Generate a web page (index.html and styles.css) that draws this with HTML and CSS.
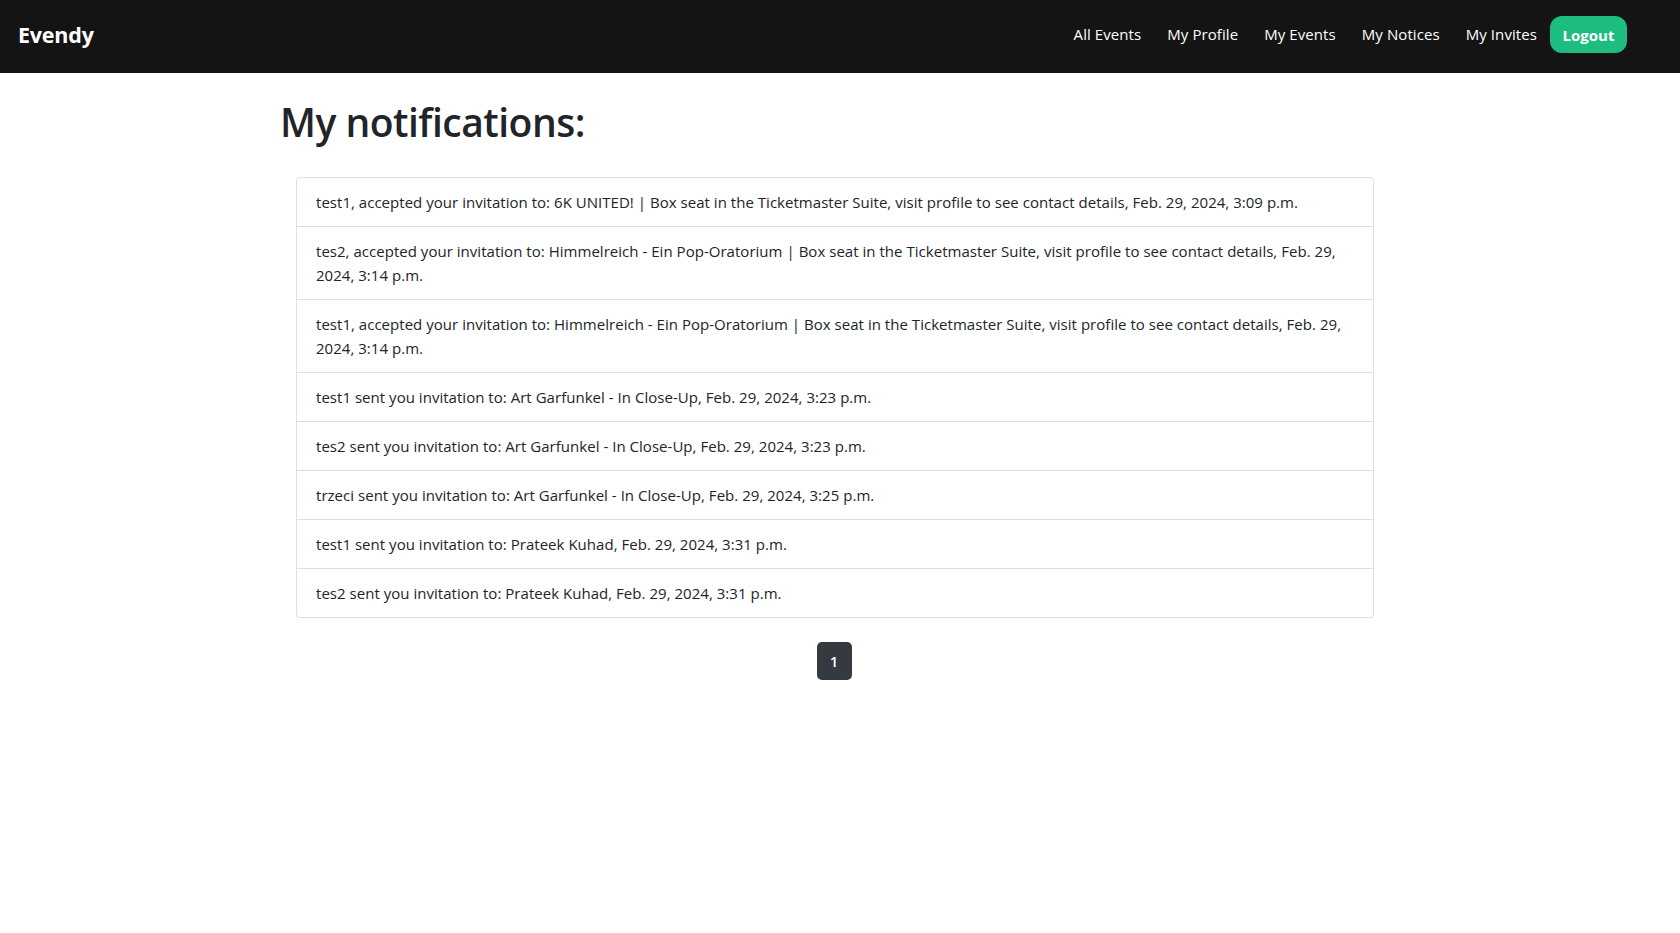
FILE: index.html
```html
<!DOCTYPE html>
<html lang="en">
<head>
<meta charset="utf-8">
<title>Evendy - My notifications</title>
<link rel="stylesheet" href="styles.css">
</head>
<body>
<nav class="navbar">
  <a class="brand" href="#">Evendy</a>
  <div class="nav-links">
    <a class="nav-link" href="#">All Events</a>
    <a class="nav-link" href="#">My Profile</a>
    <a class="nav-link" href="#">My Events</a>
    <a class="nav-link" href="#">My Notices</a>
    <a class="nav-link" href="#">My Invites</a>
    <a class="btn-logout" href="#">Logout</a>
  </div>
</nav>
<main class="container">
  <h1 class="title">My notifications:</h1>
  <ul class="list-group">
    <li class="list-item">test1, accepted your invitation to: 6K UNITED! | Box seat in the Ticketmaster Suite, visit profile to see contact details, Feb. 29, 2024, 3:09 p.m.</li>
    <li class="list-item">tes2, accepted your invitation to: Himmelreich - Ein Pop-Oratorium | Box seat in the Ticketmaster Suite, visit profile to see contact details, Feb. 29, 2024, 3:14 p.m.</li>
    <li class="list-item">test1, accepted your invitation to: Himmelreich - Ein Pop-Oratorium | Box seat in the Ticketmaster Suite, visit profile to see contact details, Feb. 29, 2024, 3:14 p.m.</li>
    <li class="list-item">test1 sent you invitation to: Art Garfunkel - In Close-Up, Feb. 29, 2024, 3:23 p.m.</li>
    <li class="list-item">tes2 sent you invitation to: Art Garfunkel - In Close-Up, Feb. 29, 2024, 3:23 p.m.</li>
    <li class="list-item">trzeci sent you invitation to: Art Garfunkel - In Close-Up, Feb. 29, 2024, 3:25 p.m.</li>
    <li class="list-item">test1 sent you invitation to: Prateek Kuhad, Feb. 29, 2024, 3:31 p.m.</li>
    <li class="list-item">tes2 sent you invitation to: Prateek Kuhad, Feb. 29, 2024, 3:31 p.m.</li>
  </ul>
  <div class="pagination">
    <span class="page-item active">1</span>
  </div>
</main>
</body>
</html>
```
FILE: styles.css
```css
* { box-sizing: border-box; }
html, body { margin: 0; padding: 0; }
body {
  font-family: "Open Sans", "Noto Sans", "Liberation Sans", sans-serif;
  font-size: 15px;
  line-height: 24px;
  color: #212529;
  background: #fff;
}
a { text-decoration: none; }

.navbar {
  height: 73px;
  background: #141414;
  display: flex;
  align-items: center;
  justify-content: space-between;
  padding: 0 53px 4px 18px;
}
.brand {
  color: #fff;
  font-weight: 700;
  font-size: 21.5px;
  letter-spacing: -0.2px;
  line-height: 30px;
}
.nav-links {
  display: flex;
  align-items: center;
}
.nav-link {
  color: #fff;
  font-size: 15px;
  padding: 0 13px 2px;
  line-height: 24px;
  letter-spacing: 0.08px;
}
.btn-logout {
  display: inline-flex;
  align-items: center;
  justify-content: center;
  width: 77px;
  height: 37px;
  background: #1dbd80;
  color: #fff;
  font-weight: 700;
  font-size: 15px;
  border-radius: 12px;
}

.container {
  width: 1114px;
  margin-left: 277px;
  padding-top: 25px;
}
.title {
  margin: 0 0 31px 3px;
  font-size: 39px;
  font-weight: 600;
  line-height: 48px;
  letter-spacing: -0.5px;
}
.list-group {
  list-style: none;
  margin: 0 17px 0 19px;
  padding: 0;
  border: 1px solid #dfdfdf;
  border-radius: 4px;
}
.list-item {
  padding: 12px 20px 12px 19px;
  border-top: 1px solid #dfdfdf;
  letter-spacing: 0.03px;
}
.list-item:first-child { border-top: 0; }

.pagination {
  display: flex;
  justify-content: center;
  margin-top: 24px;
}
.page-item {
  display: inline-flex;
  align-items: center;
  justify-content: center;
  width: 35px;
  height: 38px;
  background: #343a40;
  color: #fff;
  border-radius: 5px;
  font-size: 15px;
  font-weight: 600;
}
```
